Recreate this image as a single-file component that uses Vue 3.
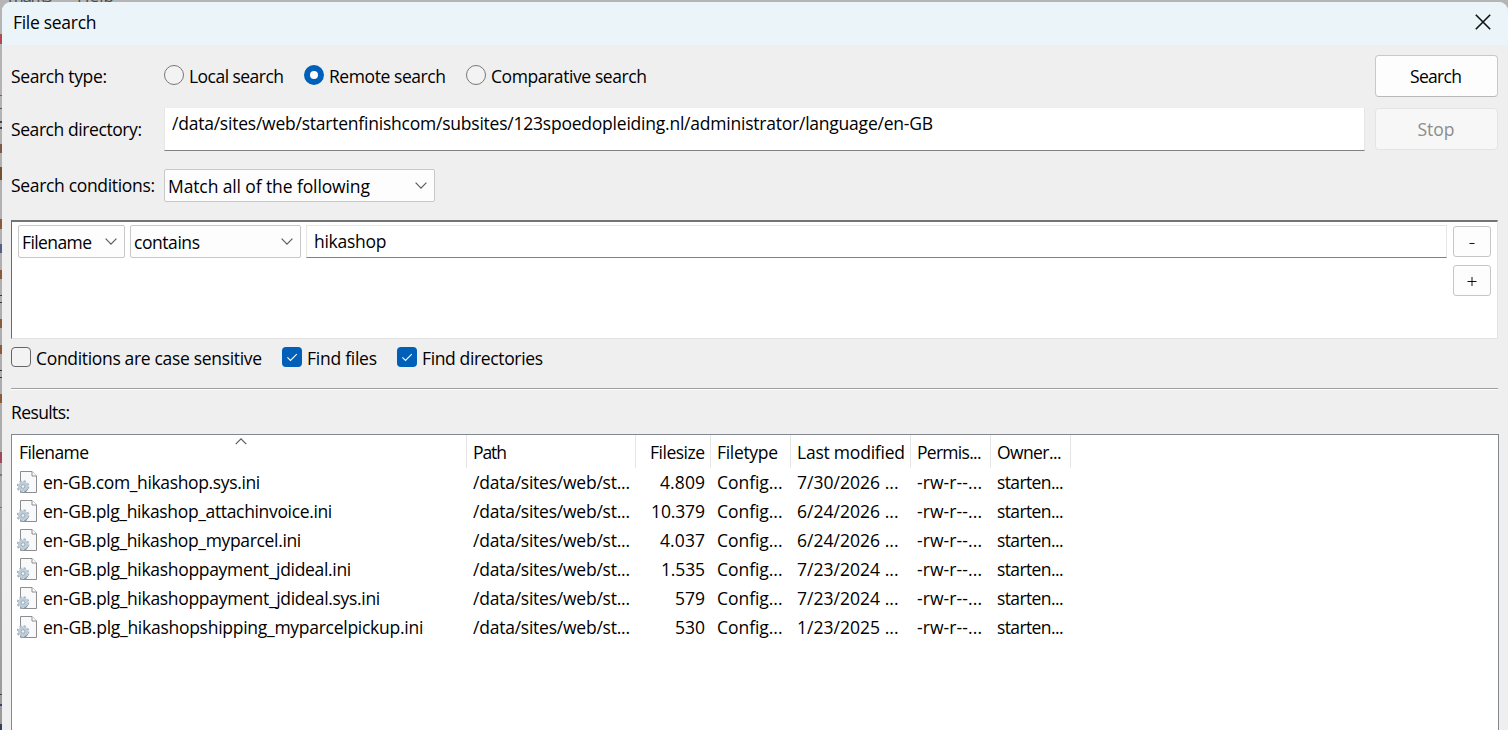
<script setup>
const columns = [
  { key: 'name', label: 'Filename', fit: 70 },
  { key: 'path', label: 'Path', fit: 34 },
  { key: 'size', label: 'Filesize', fit: 55 },
  { key: 'type', label: 'Filetype', fit: 61 },
  { key: 'modified', label: 'Last modified', fit: 108 },
  { key: 'perms', label: 'Permis...', fit: 64.5 },
  { key: 'owner', label: 'Owner...', fit: 64.5 }
]
const files = [
  ['en-GB.com_hikashop.sys.ini', 217.3, '4.809', 45, '7/30/2026 ...'],
  ['en-GB.plg_hikashop_attachinvoice.ini', 289.3, '10.379', 54, '6/24/2026 ...'],
  ['en-GB.plg_hikashop_myparcel.ini', 258.3, '4.037', 45, '6/24/2026 ...'],
  ['en-GB.plg_hikashoppayment_jdideal.ini', 308.3, '1.535', 44, '7/23/2024 ...'],
  ['en-GB.plg_hikashoppayment_jdideal.sys.ini', 337.3, '579', 30, '7/23/2024 ...'],
  ['en-GB.plg_hikashopshipping_myparcelpickup.ini', 380.3, '530', 30, '1/23/2025 ...']
]
const types = [
  { label: 'Local search', fit: 95, on: false },
  { label: 'Remote search', fit: 117, on: true },
  { label: 'Comparative search', fit: 156, on: false }
]
const checks = [
  { label: 'Conditions are case sensitive', fit: 226, on: false },
  { label: 'Find files', fit: 70, on: true },
  { label: 'Find directories', fit: 121, on: true }
]
const marks = [
  [34, 10, '#b04a50'], [95, 1, '#666'], [108, 1, '#555'], [121, 2, '#444'], [127, 2, '#444'],
  [144, 9, '#7b5a48'], [167, 13, '#735030'], [219, 10, '#8a5a3a'], [244, 9, '#556080'], [270, 9, '#8a5a3a'],
  [295, 1, '#333'], [302, 1, '#333'], [319, 9, '#8a5a3a'], [345, 9, '#8a5a3a'], [370, 1, '#333'],
  [377, 1, '#333'], [394, 9, '#8a5a3a'], [452, 11, '#9c4a58'], [474, 2, '#777'], [507, 1, '#777'],
  [694, 1, '#444'], [704, 2, '#34406a'], [724, 6, '#34405a']
]

// Adjusts tracking so that a label occupies its native control width.
const vFit = {
  mounted(el, { value }) {
    const natural = el.getBoundingClientRect().width
    const gap = (value - natural) / Math.max(1, el.textContent.length - 1)
    el.style.letterSpacing = gap + 'px'
    el.style.marginRight = -gap + 'px'
  }
}
</script>

<template>
  <div class="desktop">
    <div class="menubar"><span v-fit="44">marks</span><span v-fit="37">Help</span></div>
    <svg class="strip" width="2" height="730"><rect v-for="m in marks" :key="m[0]" x="0" :y="m[0]" width="2" :height="m[1]" :fill="m[2]" /></svg>
    <div class="window">
      <header class="titlebar">
        <span v-fit="83.5" class="t">File search</span>
        <svg class="close" width="16" height="16" viewBox="0 0 16 16"><path d="M.8.8 15.2 15.2M15.2.8.8 15.2" /></svg>
      </header>

      <div class="row type-row">
        <div class="lab"><span v-fit="96" class="t">Search type:</span></div>
        <div class="radios">
          <label v-for="r in types" :key="r.label" class="option">
            <i class="radio" :class="{ on: r.on }"></i><span v-fit="r.fit" class="t">{{ r.label }}</span>
          </label>
        </div>
        <button class="btn"><span v-fit="52" class="t">Search</span></button>
      </div>

      <div class="row dir-row">
        <div class="lab"><span v-fit="131" class="t">Search directory:</span></div>
        <div class="field dir"><span v-fit="761" class="t">/data/sites/web/startenfinishcom/subsites/123spoedopleiding.nl/administrator/language/en-GB</span></div>
        <button class="btn disabled"><span v-fit="37" class="t">Stop</span></button>
      </div>

      <div class="row cond-row">
        <div class="lab"><span v-fit="144" class="t">Search conditions:</span></div>
        <div class="select match">
          <span v-fit="202" class="t">Match all of the following</span>
          <svg class="chev" width="12" height="7" viewBox="0 0 12 7"><path d="M.6.7 6 6.1 11.4.7" /></svg>
        </div>
      </div>

      <section class="conditions">
        <div class="select sel-name">
          <span v-fit="70" class="t">Filename</span>
          <svg class="chev" width="12" height="7" viewBox="0 0 12 7"><path d="M.6.7 6 6.1 11.4.7" /></svg>
        </div>
        <div class="select sel-op">
          <span v-fit="66" class="t">contains</span>
          <svg class="chev" width="12" height="7" viewBox="0 0 12 7"><path d="M.6.7 6 6.1 11.4.7" /></svg>
        </div>
        <div class="field term"><span v-fit="72.5" class="t">hikashop</span></div>
        <div class="pm">
          <button class="mini"><svg width="12" height="12"><path d="M3.5 7.5h5" /></svg></button>
          <button class="mini"><svg width="12" height="12"><path d="M1.5 6.5h9M6 2v9" /></svg></button>
        </div>
      </section>

      <div class="checks">
        <label v-for="c in checks" :key="c.label" class="option">
          <i class="box" :class="{ on: c.on }"><svg v-if="c.on" width="20" height="20"><path d="M5.4 10.3 8.5 13.4 14.8 7.1" /></svg></i>
          <span v-fit="c.fit" class="t">{{ c.label }}</span>
        </label>
      </div>

      <div class="rule"></div>
      <div class="results-label"><span v-fit="59" class="t">Results:</span></div>

      <section class="list">
        <div class="head grid">
          <div v-for="c in columns" :key="c.key" class="cell" :class="c.key">
            <span v-fit="c.fit" class="t">{{ c.label }}</span>
            <svg v-if="c.key === 'name'" class="sort" width="12" height="7" viewBox="0 0 12 7"><path d="M.7 6.2 6 .9 11.3 6.2" /></svg>
          </div>
        </div>
        <div v-for="f in files" :key="f[0]" class="grid item">
          <div class="cell name">
            <svg class="file" width="21" height="23" viewBox="0 0 21 23">
              <path d="M3.5.5H15L19.5 5V21.5H3.5Z" fill="#f8f9fb" stroke="#8d8d8d" />
              <path d="M15 .5V5H19.5" fill="#fff" stroke="#8d8d8d" />
              <circle cx="6" cy="15.5" r="5.3" fill="none" stroke="#a3b3be" stroke-width="2" stroke-dasharray="2.2 1.96" />
              <circle cx="6" cy="15.5" r="3.5" fill="none" stroke="#bccdd8" stroke-width="3.2" />
              <circle cx="6" cy="15.5" r="1.8" fill="#f2f5f7" stroke="#8798a4" stroke-width=".8" />
              <path d="M6.5 21.2a5.6 5.6 0 0 0 4.3-3.2" fill="none" stroke="#82939f" stroke-width="1" />
            </svg>
            <span v-fit="f[1]" class="t">{{ f[0] }}</span>
          </div>
          <div class="cell path"><span v-fit="157" class="t">/data/sites/web/st...</span></div>
          <div class="cell size"><span v-fit="f[3]" class="t">{{ f[2] }}</span></div>
          <div class="cell type"><span v-fit="65.5" class="t">Config...</span></div>
          <div class="cell modified"><span v-fit="101.5" class="t">{{ f[4] }}</span></div>
          <div class="cell perms"><span v-fit="65" class="t">-rw-r--...</span></div>
          <div class="cell owner"><span v-fit="66.5" class="t">starten...</span></div>
        </div>
      </section>
    </div>
  </div>
</template>

<style>
body { overflow: hidden; }
</style>

<style scoped>
* { box-sizing: border-box; }
.desktop {
  position: relative; width: 1508px; height: 730px; padding: 2px 0 0 2px; overflow: hidden;
  background: linear-gradient(#b5b5b5, #aaa 70%, #999);
  font: 17.5px/24px "Open Sans", "Noto Sans", sans-serif; color: #000;
}
.menubar { position: absolute; left: 8px; top: -16px; display: flex; gap: 25px; color: #4c4c4c; font-size: 17px; }
.strip { position: absolute; left: 0; top: 0; }
.window { position: relative; width: 1506px; height: 728px; background: #efefef; border-radius: 9px 9px 0 0; overflow: hidden; }
.t { display: inline-block; white-space: pre; flex: none; }
svg { display: block; flex: none; }
.titlebar { height: 43px; background: #ebf4f8; display: flex; align-items: center; justify-content: space-between; padding: 0 17px 3px 11px; }
.close path { stroke: #111; stroke-width: 1.6; fill: none; }
.row { display: flex; padding: 0 10px 0 9px; }
.lab { width: 153px; flex: none; }
.type-row { margin-top: 10px; height: 42px; }
.type-row .lab { padding-top: 9px; }
.radios { display: flex; flex: 1; gap: 20px; height: 42px; }
.option { display: flex; align-items: flex-start; }
.radio { width: 20px; height: 20px; border: 1px solid #777; border-radius: 50%; background: #f3f3f3; margin: 10px 5px 0 0; flex: none; }
.radio.on { border: 6px solid #005fb8; background: #fff; }
.radios .t { margin-top: 9px; }
.btn { width: 123px; height: 42px; flex: none; border: 1px solid #c9c9c9; border-bottom-color: #b9b9b9; border-radius: 4px; background: #fdfdfd; font: inherit; color: #000; padding: 0 1px 1px 0; display: flex; align-items: center; justify-content: center; }
.btn.disabled { color: #8c8c8c; background: #f7f7f7; border-color: #e4e4e4; }
.dir-row { margin-top: 11px; height: 43px; }
.dir-row .lab { padding-top: 9px; }
.field { background: #fff; border: 1px solid #e6e6e6; border-bottom-color: #808080; }
.dir { width: 1201px; height: 43px; margin: 0 10px 0 0; padding: 3px 7px; border-top: 0; }
.cond-row { margin-top: 18px; height: 33px; }
.cond-row .lab { padding-top: 4px; }
.select { height: 33px; background: #fdfdfd; border: 1px solid #c8c8c8; border-radius: 2px; display: flex; align-items: center; justify-content: space-between; padding: 1px 7px 0 3px; flex: none; }
.chev path, .sort path { fill: none; stroke: #5c5c5c; stroke-width: 1.2; }
.chev { margin-top: -2px; }
.match { width: 271px; }
.conditions { margin: 18px 9px 0; height: 119px; width: 1487px; background: #fff; border: 2px solid #6b6b6b; border-top-color: #747474; border-right: 1px solid #e3e3e3; border-bottom: 1px solid #e3e3e3; border-left-width: 1.5px; display: flex; align-items: flex-start; padding: 3px 6px 0 6px; }
.sel-name { width: 107px; }
.sel-op { width: 171px; margin-left: 5px; }
.term { flex: 1; margin: 0 6px 0 5px; height: 33px; padding: 3px 7px; }
.pm { display: flex; flex-direction: column; gap: 8px; padding-top: 1px; }
.mini { width: 38px; height: 31px; padding: 0; background: #fdfdfd; border: 1px solid #c6c6c6; border-radius: 3px; display: flex; align-items: center; justify-content: center; }
.mini path { stroke: #111; fill: none; }
.checks { display: flex; gap: 20px; margin: 8px 0 0 9px; height: 24px; }
.checks .t { margin-top: -1px; }
.box { width: 20px; height: 20px; border: 1px solid #666; border-radius: 4px; background: #f3f3f3; margin-right: 5px; flex: none; }
.box.on { border: 0; background: #005fb8; }
.box path { stroke: #fff; stroke-width: 1.1; fill: none; }
.rule { margin: 17px 10px 0 9px; height: 2px; background: #a0a0a0; border-bottom: 1px solid #fff; }
.results-label { margin: 10px 0 0 9px; height: 34px; }
.list { margin: 0 9px; width: 1488px; height: 300px; background: #fff; border: 1px solid #828790; }
.grid { display: grid; grid-template-columns: 455px 169px 75px 80px 120px 80px 80px; height: 29px; }
.head { height: 33px; }
.cell { position: relative; display: flex; align-items: center; padding: 0 0 2px 6px; overflow: hidden; }
.head .cell { border-right: 1px solid #e5e5e5; padding-top: 2px; }
.cell.name { padding-left: 5px; }
.head .cell.name { padding-left: 7px; }
.cell.size { justify-content: flex-end; padding: 0 6px 2px 0; }
.head .cell.size { padding: 2px 5px 2px 0; }
.file { margin: 1px 5px 0 0; }
.sort { position: absolute; left: 223px; top: 3px; }
</style>
